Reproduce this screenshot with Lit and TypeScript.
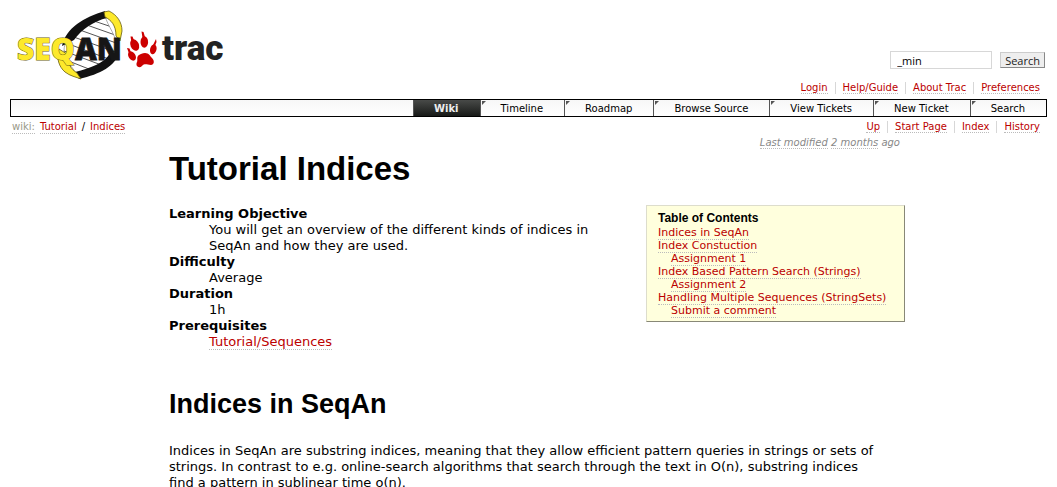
import { LitElement, html, css } from "lit";
import { customElement, property } from "lit/decorators.js";

const TABS = ["Wiki", "Timeline", "Roadmap", "Browse Source", "View Tickets", "New Ticket", "Search"];
const META = ["Login", "Help/Guide", "About Trac", "Preferences"];
const CONTEXT = ["Up", "Start Page", "Index", "History"];
const TOC = [
  { text: "Indices in SeqAn", sub: false },
  { text: "Index Constuction", sub: false },
  { text: "Assignment 1", sub: true },
  { text: "Index Based Pattern Search (Strings)", sub: false },
  { text: "Assignment 2", sub: true },
  { text: "Handling Multiple Sequences (StringSets)", sub: false },
  { text: "Submit a comment", sub: true },
];

const linkStyles = css`
  a {
    color: #b00;
    text-decoration: none;
    border-bottom: 1px dotted #bbb;
  }
`;

@customElement("site-logo")
export class SiteLogo extends LitElement {
  static styles = css`
    :host { display: block; }
    svg { display: block; }
    .seqan { font: 800 30px "Open Sans", sans-serif; }
    .trac { font: 900 35px Roboto, sans-serif; fill: #222; }
  `;

  render() {
    return html`
      <svg width="220" height="72" viewBox="10 10 220 72" role="img" aria-label="SeqAn trac">
        <defs>
          <clipPath id="helix">
            <path d="M64 51C64 34 82 20 105 15C107 27 118 35 117 52C112 63 96 71 77 76C73 66 65 62 64 51Z" />
          </clipPath>
        </defs>
        <path d="M64 51C64 34 82 20 105 15C107 27 118 35 117 52C112 63 96 71 77 76C73 66 65 62 64 51Z" fill="#fff" stroke="#999" stroke-width=".8" />
        <g clip-path="url(#helix)" stroke="#555" stroke-width="1">
          <path d="M91 20l27 9M84 24l34 12M77 29l42 15M71 36l47 17M66 43l48 18M64 51l40 15M66 60l28 11" />
        </g>
        <path d="M62 46C66 28 84 17 105 11L107 18C94 21 82 29 74 40Z" fill="#111" />
        <path d="M75 72C91 68 105 63 110 53L119 53C115 66 101 74 79 79Z" fill="#111" />
        <path d="M104 12L109 11C117 15 122 22 122 31L120 41L116 36C116 25 111 20 105 17Z" fill="#fde92b" stroke="#665c10" stroke-width=".8" />
        <path d="M59 49C56 58 59 67 65 72C70 76 76 77 81 79L77 73C73 70 70 68 69 62L67 54Z" fill="#fde92b" stroke="#665c10" stroke-width=".8" />
        <text class="seqan" x="17" y="60" fill="#fde92b" stroke="#6b6010" stroke-width="1" paint-order="stroke">SEQ</text>
        <text class="seqan" x="75" y="60" fill="#161616" stroke="#161616" stroke-width=".8">AN</text>
        <g fill="#c00">
          <ellipse cx="132" cy="56" rx="3.5" ry="5" transform="rotate(-32 132 56)" />
          <ellipse cx="134.700" cy="45" rx="4.200" ry="6" transform="rotate(-24 134.700 45)" />
          <ellipse cx="144.300" cy="42" rx="3.800" ry="5.800" />
          <ellipse cx="153.300" cy="49.300" rx="3.200" ry="5" transform="rotate(14 153.300 49.300)" />
          <path d="M127 48l2.500 0.500l1.500 4l-2 1zM130.500 36.500l2 0l2 5l-3 1zM141.500 31.500l2 0.500l1.500 5l-2.500 1zM156 39l0.500 3l-1.500 4l-2-1z" />
          <path d="M145 53C149 53 150 56 152 58C155 61 154 65 151 65C147 65 145 63 142 66C139 69 135 66 137 62C138 60 136 57 139 55C141 54 142 53 145 53Z" />
        </g>
        <text class="trac" x="162" y="60">trac</text>
      </svg>
    `;
  }
}

@customElement("link-row")
export class LinkRow extends LitElement {
  @property({ attribute: false }) items: string[] = [];

  static styles = [
    linkStyles,
    css`
      :host { display: block; }
      ul { display: flex; justify-content: flex-end; margin: 0; padding: 0; list-style: none; }
      li { padding: 0 7px; line-height: 12px; border-right: 1px solid #d7d7d7; }
      li:last-child { border-right: 0; }
    `,
  ];

  render() {
    return html`<ul>${this.items.map((t) => html`<li><a href="#">${t}</a></li>`)}</ul>`;
  }
}

@customElement("app-root")
export class AppRoot extends LitElement {
  static styles = [
    linkStyles,
    css`
      :host {
        display: block;
        padding: 10px;
        background: #fff;
        color: #000;
        font: 13px/16px Verdana, "DejaVu Sans", sans-serif;
      }
      .header { display: flex; justify-content: space-between; align-items: flex-start; }
      .search { display: flex; gap: 8px; padding: 41px 2px 0 0; }
      .search input {
        box-sizing: border-box; width: 102px; height: 18px; padding: 0 6px;
        border: 1px solid #d7d7d7; border-radius: 0; background: #fff;
        font: 11px "Open Sans", sans-serif; color: #000;
      }
      .search button {
        box-sizing: border-box; height: 16px; padding: 0 4px; margin-top: 1px;
        border: 1px solid; border-color: #ccc #888 #888 #ccc; border-radius: 0;
        background: #eee; color: #222; font: 11px/13px "Open Sans", sans-serif;
      }
      .small { font-size: 10px; }
      .tabs {
        display: flex; justify-content: flex-end; margin: 5px 0 0; padding: 0; list-style: none;
        border: 1px solid #000; font-size: 10px; line-height: 14px;
        background: linear-gradient(#f7f7f7, #fff);
      }
      .tabs li { border-left: 1px solid #555; }
      .tabs a { display: block; position: relative; padding: 2px 21px 0 20px; color: #000; border: 0; }
      .tabs a::before {
        content: ""; position: absolute; left: 1px; top: 1px;
        border-top: 4px solid #555; border-right: 4px solid transparent;
      }
      .tabs .active a {
        background: linear-gradient(#484a48, #303230 50%, #181a18); color: #eee; font-weight: bold;
      }
      .tabs .active a::before { display: none; }
      .context { display: flex; justify-content: space-between; padding: 4px 0 0 2px; font-size: 10px; line-height: 12px; }
      .crumbs { display: flex; gap: 5px; }
      .muted { color: #998; }
      .page { margin: 0 142px 0 159px; }
      .modified { margin: 3px 5px 0 0; text-align: right; font-size: 10px; line-height: 12px; font-style: italic; color: #888; }
      .modified a { color: inherit; }
      h1, h2 { font-family: Arial, "Liberation Sans", sans-serif; font-weight: bold; margin: 0; }
      h1 { font-size: 33px; line-height: 40px; }
      h2 { margin-top: 36px; font-size: 27px; line-height: 36px; }
      .intro { display: flex; justify-content: space-between; align-items: flex-start; gap: 32px; margin-top: 16px; }
      dl { margin: 0; padding-top: 1px; }
      dt { font-weight: bold; }
      dd { margin: 0 0 0 40px; }
      .toc {
        box-sizing: border-box; flex: none; min-width: 259px; padding: 5px 11px 4px;
        border: 1px solid; border-color: #ddc #887 #887 #ddc;
        background: #ffffdd; font-size: 11px; line-height: 13px;
      }
      .toc h3 { margin: 0; font: bold 12px/15px Arial, "Liberation Sans", sans-serif; }
      .toc ul { margin: 0; padding: 0; list-style: none; }
      .toc .sub { padding-left: 13px; }
      p { margin: 21px 24px 0 0; }
    `,
  ];

  render() {
    return html`
      <header>
        <div class="header">
          <site-logo></site-logo>
          <form class="search" @submit=${(e: Event) => e.preventDefault()}>
            <input type="text" aria-label="Search terms" .value=${"_min"} />
            <button>Search</button>
          </form>
        </div>
        <link-row class="small" .items=${META}></link-row>
        <nav>
          <ul class="tabs">
            ${TABS.map((t, i) => html`<li class=${i === 0 ? "active" : ""}><a href="#">${t}</a></li>`)}
          </ul>
        </nav>
      </header>
      <div class="context">
        <div class="crumbs"><a class="muted" href="#">wiki:</a><a href="#">Tutorial</a><span>/</span><a href="#">Indices</a></div>
        <link-row .items=${CONTEXT}></link-row>
      </div>
      <main class="page">
        <div class="modified"><a href="#">Last modified</a> <a href="#">2 months</a> ago</div>
        <h1>Tutorial Indices</h1>
        <div class="intro">
          <dl>
            <dt>Learning Objective</dt>
            <dd>You will get an overview of the different kinds of indices in SeqAn and how they are used.</dd>
            <dt>Difficulty</dt>
            <dd>Average</dd>
            <dt>Duration</dt>
            <dd>1h</dd>
            <dt>Prerequisites</dt>
            <dd><a href="#">Tutorial/Sequences</a></dd>
          </dl>
          <nav class="toc" aria-label="Table of Contents">
            <h3>Table of Contents</h3>
            <ul>${TOC.map((t) => html`<li class=${t.sub ? "sub" : ""}><a href="#">${t.text}</a></li>`)}</ul>
          </nav>
        </div>
        <h2>Indices in SeqAn</h2>
        <p>
          Indices in SeqAn are substring indices, meaning that they allow efficient pattern queries in strings or sets of
          strings. In contrast to e.g. online-search algorithms that search through the text in O(n), substring indices
          find a pattern in sublinear time o(n).
        </p>
      </main>
    `;
  }
}
